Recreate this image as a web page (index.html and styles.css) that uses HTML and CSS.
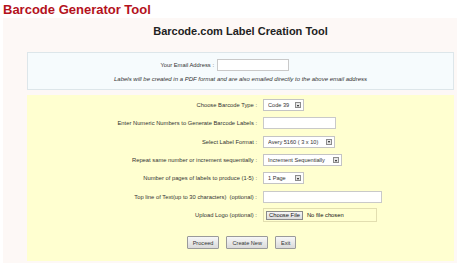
FILE: index.html
```html
<!DOCTYPE html>
<html lang="en">
<head>
    <meta charset="UTF-8">
    <meta name="viewport" content="width=device-width, initial-scale=1.0">
    <title>Barcode Generator Tool</title>
    <link rel="stylesheet" href="styles.css">
</head>
<body>
    <h1 class="page-title">Barcode Generator Tool</h1>
    <div class="panel">
        <h2 class="panel-title">Barcode.com Label Creation Tool</h2>

        <div class="email-box">
            <div class="email-row">
                <label for="email">Your Email Address :</label>
                <input type="text" id="email" class="field w-email">
            </div>
            <p class="note">Labels will be created in a PDF format and are also emailed directly to the above email address</p>
        </div>

        <form class="form-box" onsubmit="return false">
            <div class="form-grid">
                <label>Choose Barcode Type :</label>
                <span class="select w-type">
                    <select><option>Code 39</option><option>Code 128</option></select>
                    <i class="arrow"></i>
                </span>

                <label>Enter Numeric Numbers to Generate Barcode Labels :</label>
                <input type="text" class="field w-numbers">

                <label>Select Label Format :</label>
                <span class="select w-format">
                    <select><option>Avery 5160 ( 3 x 10)</option></select>
                    <i class="arrow"></i>
                </span>

                <label>Repeat same number or increment sequentially :</label>
                <span class="select w-repeat">
                    <select><option>Increment Sequentially</option><option>Repeat Same Number</option></select>
                    <i class="arrow"></i>
                </span>

                <label>Number of pages of labels to produce (1-5) :</label>
                <span class="select w-pages">
                    <select><option>1 Page</option><option>2 Pages</option></select>
                    <i class="arrow"></i>
                </span>

                <label>Top line of Text(up to 30 characters) &nbsp;(optional) :</label>
                <input type="text" class="field w-topline">

                <label>Upload Logo (optional) :</label>
                <span class="file-box">
                    <span class="file-btn">Choose File</span>
                    <span>No file chosen</span>
                </span>
            </div>

            <div class="actions">
                <button type="submit">Proceed</button>
                <button type="reset">Create New</button>
                <button type="button">Exit</button>
            </div>
        </form>
    </div>
</body>
</html>
```

FILE: styles.css
```css
* {
    box-sizing: border-box;
}

body {
    margin: 0;
    padding: 1px 4px 0 3px;
    background: #fff;
    font-family: 'Liberation Sans', Arial, sans-serif;
    color: #333;
}

.page-title {
    margin: 0;
    font-size: 13px;
    line-height: 17px;
    color: #b4121c;
}

.panel {
    background: #fdf8f6;
    padding: 0 3px 2px 24px;
}

.panel-title {
    margin: 0 0 14px;
    padding-top: 6px;
    font-size: 11px;
    line-height: 14px;
    text-align: center;
    color: #222;
}

/* email area */
.email-box {
    height: 38px;
    padding-top: 6px;
    background: #f6fbfd;
    border: 1px solid #dde6ea;
}

.email-row {
    display: grid;
    grid-template-columns: 186px auto;
    column-gap: 3px;
    align-items: center;
    font-size: 5.8px;
}

.email-row label {
    text-align: right;
}

.note {
    margin: 5px 0 0;
    font-size: 6px;
    line-height: 7px;
    font-style: italic;
    text-align: center;
}

/* main form */
.form-box {
    margin: 5px 0 0;
    padding: 1px 0 12px;
    background: #ffffd0;
}

.form-grid {
    display: grid;
    grid-template-columns: 230px auto;
    grid-auto-rows: 18.33px;
    column-gap: 6px;
    align-items: center;
    justify-items: start;
    font-size: 5.8px;
}

.form-grid label {
    justify-self: end;
    text-align: right;
}

.field {
    height: 12px;
    margin: 0;
    padding: 0 2px;
    border: 1px solid #c9c9c9;
    background: #fff;
    font: inherit;
}

.w-email { width: 72px; }
.w-numbers { width: 73px; }
.w-topline { width: 119px; }

.select {
    position: relative;
    display: block;
    height: 12px;
}

.select select {
    appearance: none;
    -webkit-appearance: none;
    width: 100%;
    height: 100%;
    margin: 0;
    padding: 0 0 0 4px;
    border: 1px solid #c4c4c4;
    border-radius: 0;
    background: #fff;
    font: inherit;
    font-size: 5.6px;
    color: #333;
}

.arrow {
    position: absolute;
    top: 3px;
    right: 3px;
    width: 6px;
    height: 6px;
    border: 1px solid #8c8c8c;
    background: #e6e6e6;
    pointer-events: none;
}

.arrow::after {
    content: '';
    position: absolute;
    left: 1px;
    top: 1.5px;
    border-left: 1.5px solid transparent;
    border-right: 1.5px solid transparent;
    border-top: 2px solid #111;
}

.w-type { width: 41px; }
.w-format { width: 72px; }
.w-repeat { width: 79px; }
.w-pages { width: 41px; }

.file-box {
    display: flex;
    align-items: center;
    gap: 4px;
    width: 114px;
    height: 14px;
    padding: 0 2px;
    border: 1px solid #e2deb0;
    color: #111;
}

.file-btn {
    height: 9px;
    padding: 0 2px;
    line-height: 7px;
    border: 1px solid #8a8a8a;
    background: linear-gradient(#f6f6f6, #dcdcdc);
    color: #111;
}

/* buttons */
.actions {
    display: flex;
    justify-content: center;
    gap: 7px;
    margin-top: 12px;
    padding-left: 2px;
}

.actions button {
    height: 13px;
    padding: 0 5px;
    border: 1px solid #9a9a9a;
    border-radius: 1px;
    background: linear-gradient(#f7f7f7, #dadada);
    font-family: inherit;
    font-size: 5.6px;
    color: #333;
    cursor: pointer;
}
```
